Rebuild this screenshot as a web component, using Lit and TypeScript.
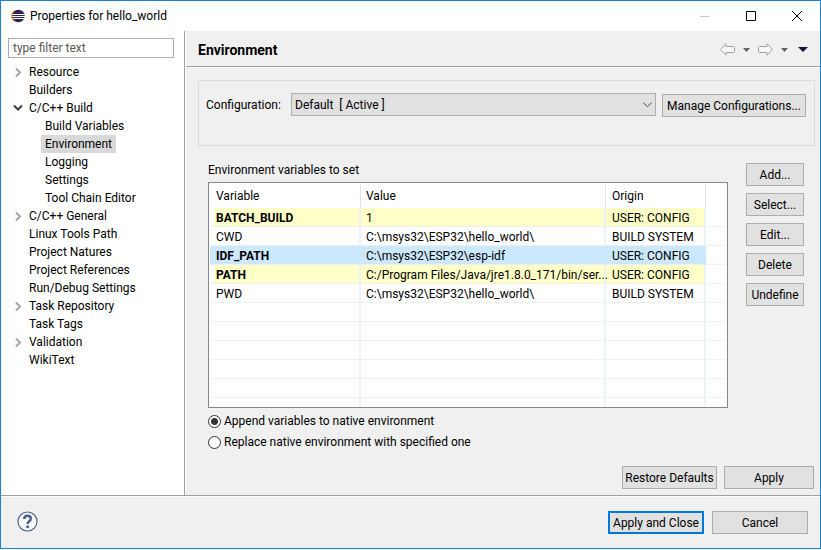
import { LitElement, html, css, svg, nothing } from "lit";
import { customElement, state } from "lit/decorators.js";

interface TreeItem {
  label: string;
  arrow?: "open" | "closed";
  child?: boolean;
}

interface EnvVar {
  name: string;
  value: string;
  origin: string;
}

const TREE: TreeItem[] = [
  { label: "Resource", arrow: "closed" },
  { label: "Builders" },
  { label: "C/C++ Build", arrow: "open" },
  { label: "Build Variables", child: true },
  { label: "Environment", child: true },
  { label: "Logging", child: true },
  { label: "Settings", child: true },
  { label: "Tool Chain Editor", child: true },
  { label: "C/C++ General", arrow: "closed" },
  { label: "Linux Tools Path" },
  { label: "Project Natures" },
  { label: "Project References" },
  { label: "Run/Debug Settings" },
  { label: "Task Repository", arrow: "closed" },
  { label: "Task Tags" },
  { label: "Validation", arrow: "closed" },
  { label: "WikiText" },
];

const VARS: EnvVar[] = [
  { name: "BATCH_BUILD", value: "1", origin: "USER: CONFIG" },
  { name: "CWD", value: "C:\\msys32\\ESP32\\hello_world\\", origin: "BUILD SYSTEM" },
  { name: "IDF_PATH", value: "C:\\msys32\\ESP32\\esp-idf", origin: "USER: CONFIG" },
  { name: "PATH", value: "C:/Program Files/Java/jre1.8.0_171/bin/ser...", origin: "USER: CONFIG" },
  { name: "PWD", value: "C:\\msys32\\ESP32\\hello_world\\", origin: "BUILD SYSTEM" },
];

const EMPTY_ROWS = 5;

const twistie = (kind?: "open" | "closed") =>
  kind === "open"
    ? svg`<path d="M1 3.5L5 7.5L9 3.5" stroke="#404040" />`
    : kind === "closed"
      ? svg`<path d="M3 2.5L7 6.5L3 10.5" stroke="#a6a6a6" />`
      : nothing;

const shared = css`
  * {
    box-sizing: border-box;
  }
  svg {
    display: block;
    flex: none;
  }
  button,
  input,
  select {
    font: inherit;
    color: inherit;
    margin: 0;
    border-radius: 0;
  }
  .btn {
    height: 23px;
    padding: 0;
    border: 1px solid #adadad;
    background: #e1e1e1;
    text-align: center;
    white-space: nowrap;
  }
  .icon-btn {
    display: flex;
    padding: 0;
    border: 0;
    background: none;
  }
`;

@customElement("page-tree")
export class PageTree extends LitElement {
  @state() private selected = "Environment";

  static styles = [
    shared,
    css`
      :host {
        display: block;
        padding: 7px 10px 7px 7px;
        background: #fff;
      }
      .filter {
        display: block;
        width: 100%;
        height: 20px;
        padding: 0 4px;
        border: 1px solid #abadb3;
        background: #fff;
        outline: none;
      }
      .filter::placeholder {
        color: #5a5a5a;
        opacity: 1;
      }
      .tree {
        margin: 5px 0 0;
        padding: 0;
        list-style: none;
      }
      .item {
        display: flex;
        align-items: center;
        height: 18px;
        padding-left: 5px;
      }
      .item.child {
        padding-left: 21px;
      }
      .twistie {
        width: 12px;
        height: 12px;
      }
      .label {
        height: 18px;
        padding: 0 4px;
        border: 0;
        background: none;
        line-height: 18px;
        white-space: nowrap;
      }
      .label.selected {
        background: #d9d9d9;
      }
    `,
  ];

  render() {
    return html`
      <input class="filter" type="text" aria-label="Filter" placeholder="type filter text" />
      <ul class="tree">
        ${TREE.map(
          (t) => html`<li class="item ${t.child ? "child" : ""}">
            <svg class="twistie" viewBox="0 0 12 12" fill="none" stroke-width="2" aria-hidden="true">${twistie(t.arrow)}</svg>
            <button class="label ${t.label === this.selected ? "selected" : ""}" @click=${() => (this.selected = t.label)}>${t.label}</button>
          </li>`
        )}
      </ul>
    `;
  }
}

@customElement("variable-table")
export class VariableTable extends LitElement {
  @state() private selected = "IDF_PATH";

  static styles = [
    shared,
    css`
      :host {
        display: block;
        padding: 1px;
        border: 1px solid #828790;
        background: #fff;
      }
      .grid {
        width: 100%;
        table-layout: fixed;
        border-collapse: separate;
        border-spacing: 0;
      }
      .c-name {
        width: 151px;
      }
      .c-origin {
        width: 100px;
      }
      .c-rest {
        width: 20px;
      }
      th,
      td {
        height: 19px;
        padding: 2px 0 0 6px;
        border-right: 2px solid #edf2f8;
        border-bottom: 1px solid #f0f0f0;
        background-clip: padding-box;
        line-height: 16px;
        text-align: left;
        white-space: nowrap;
        font-weight: normal;
      }
      th {
        height: 24px;
        padding-top: 0;
        border-right: 1px solid #e5e5e5;
        border-bottom: 0;
      }
      th:nth-child(2),
      td:nth-child(2) {
        padding-left: 5px;
      }
      th:last-child,
      td:last-child {
        border-right: 0;
      }
      .user td {
        background-color: #ffffc8;
      }
      .user td:first-child {
        background: linear-gradient(90deg, #fff 4px, #ffffc8 4px) padding-box;
        font-weight: bold;
      }
      .user td:last-child {
        background: #fff;
      }
      .user.selected td:not(:last-child) {
        border-right-color: #cce8ff;
        background: #cce8ff;
      }
      tbody tr:last-child td {
        height: 8px;
        border-bottom: 0;
      }
    `,
  ];

  render() {
    return html`
      <table class="grid" aria-label="Environment variables to set">
        <colgroup>
          <col class="c-name" />
          <col />
          <col class="c-origin" />
          <col class="c-rest" />
        </colgroup>
        <thead>
          <tr><th>Variable</th><th>Value</th><th>Origin</th><th></th></tr>
        </thead>
        <tbody>
          ${VARS.map(
            (v) => html`<tr
              class="${v.origin === "USER: CONFIG" ? "user" : ""} ${v.name === this.selected ? "selected" : ""}"
              @click=${() => (this.selected = v.name)}
            ><td>${v.name}</td><td>${v.value}</td><td>${v.origin}</td><td></td></tr>`
          )}
          ${Array.from({ length: EMPTY_ROWS + 1 }, () => html`<tr><td></td><td></td><td></td><td></td></tr>`)}
        </tbody>
      </table>
    `;
  }
}

@customElement("app-root")
export class AppRoot extends LitElement {
  static styles = [
    shared,
    css`
      :host {
        display: block;
        font: 12px/16px Roboto, "Open Sans", sans-serif;
        color: #000;
      }
      .window {
        display: flex;
        flex-direction: column;
        min-height: calc(100vh - 1px);
        border: 1px solid #1883d7;
        background: #f0f0f0;
      }
      .titlebar {
        display: flex;
        align-items: center;
        height: 30px;
        padding: 0 17px 0 10px;
        background: #fff;
      }
      .title {
        flex: 1;
        margin-left: 5px;
      }
      .controls {
        display: flex;
        gap: 34px;
      }
      .main {
        display: flex;
        flex: 1;
        border-bottom: 1px solid #a0a0a0;
      }
      .side {
        flex: none;
        width: 184px;
        border-right: 1px solid #a0a0a0;
      }
      .page {
        display: flex;
        flex: 1;
        flex-direction: column;
        min-width: 0;
        border-left: 1px solid #fff;
      }
      .header {
        display: flex;
        align-items: center;
        height: 36px;
        padding: 2px 12px 0;
        border-bottom: 1px solid #a0a0a0;
        box-shadow: 0 1px #fff;
      }
      .heading {
        flex: 1;
        margin: 0;
        font-size: 14px;
        line-height: 18px;
      }
      .nav {
        display: flex;
        align-items: center;
      }
      .drop {
        margin: 0 8px;
      }
      .menu {
        margin-left: 2px;
      }
      .config {
        display: flex;
        align-items: flex-start;
        height: 66px;
        margin: 13px 5px 0 12px;
        padding: 12px 8px 12px 7px;
        border: 1px solid #dcdcdc;
      }
      .config-label {
        flex: none;
        width: 85px;
        margin-top: 4px;
        white-space: nowrap;
      }
      .combo {
        display: grid;
        flex: 1;
        align-items: center;
        margin-right: 6px;
      }
      .select {
        grid-area: 1 / 1;
        width: 100%;
        height: 23px;
        padding: 0 20px 0 3px;
        border: 1px solid #adadad;
        background: #e1e1e1;
        appearance: none;
        white-space: pre;
      }
      .chevron {
        grid-area: 1 / 1;
        justify-self: end;
        margin-right: 4px;
        pointer-events: none;
      }
      .manage {
        width: 144px;
        margin-top: 1px;
      }
      .env {
        display: flex;
        gap: 18px;
        margin: 16px 16px 0 22px;
      }
      .vars {
        flex: 1;
        min-width: 0;
      }
      .caption {
        display: block;
        margin-bottom: 4px;
      }
      .actions {
        display: flex;
        flex-direction: column;
        gap: 7px;
        width: 58px;
        margin-top: 1px;
      }
      .radios {
        display: flex;
        flex-direction: column;
        gap: 5px;
        margin-top: 5px;
      }
      .radio {
        display: flex;
        align-items: center;
        gap: 3px;
      }
      .radio input {
        width: 13px;
        height: 13px;
        border: 1px solid #333;
        border-radius: 50%;
        background: #fff;
        appearance: none;
      }
      .radio input:checked {
        background: radial-gradient(circle, #333 3px, #fff 4px);
      }
      .page-buttons {
        display: flex;
        justify-content: flex-end;
        gap: 7px;
        margin: auto 6px 6px;
      }
      .restore {
        width: 95px;
      }
      .apply {
        width: 90px;
      }
      .footer {
        display: flex;
        align-items: center;
        justify-content: flex-end;
        gap: 8px;
        height: 52px;
        padding: 0 12px 0 16px;
        border-top: 1px solid #fff;
      }
      .help {
        margin-right: auto;
        padding-bottom: 2px;
      }
      .wide {
        width: 96px;
      }
      .default {
        border: 2px solid #0078d7;
      }
    `,
  ];

  render() {
    return html`
      <div class="window">
        <div class="titlebar">
          <svg width="14" height="14" viewBox="0 0 14 14" aria-hidden="true">
            <circle cx="6" cy="7" r="6" fill="#f7941e" />
            <circle cx="7.5" cy="7" r="6.2" fill="#2c2255" />
            <path d="M1 5.5H14M1 7.5H14M2 9.5H13" stroke="#fff" />
          </svg>
          <span class="title">Properties for hello_world</span>
          <div class="controls">
            <button class="icon-btn" aria-label="Minimize">
              <svg width="12" height="12" viewBox="0 0 12 12"><path d="M1 6.5H11" stroke="#c8c8c8" /></svg>
            </button>
            <button class="icon-btn" aria-label="Maximize">
              <svg width="12" height="12" viewBox="0 0 12 12"><path d="M1.5 1.5H10.5V10.5H1.5Z" fill="none" stroke="#000" /></svg>
            </button>
            <button class="icon-btn" aria-label="Close">
              <svg width="12" height="12" viewBox="0 0 12 12"><path d="M1 1L11 11M11 1L1 11" stroke="#000" /></svg>
            </button>
          </div>
        </div>
        <div class="main">
          <page-tree class="side"></page-tree>
          <div class="page">
            <div class="header">
              <h1 class="heading">Environment</h1>
              <div class="nav">
                <button class="icon-btn" aria-label="Back">
                  <svg width="15" height="13" viewBox="0 0 15 13"><path d="M.7 6.5L6 .8V3.5H13.5Q14.5 3.5 14.5 4.5V8.5Q14.5 9.5 13.5 9.5H6V12.2Z" fill="#f8f8f8" stroke="#a0a0a0" /></svg>
                </button>
                <button class="icon-btn drop" aria-label="Back history">
                  <svg width="7" height="4" viewBox="0 0 7 4"><path d="M0 0H7L3.5 4Z" fill="#606468" /></svg>
                </button>
                <button class="icon-btn" aria-label="Forward">
                  <svg width="15" height="13" viewBox="0 0 15 13"><path d="M14.3 6.5L9 .8V3.5H1.5Q.5 3.5 .5 4.5V8.5Q.5 9.5 1.5 9.5H9V12.2Z" fill="#f8f8f8" stroke="#a0a0a0" /></svg>
                </button>
                <button class="icon-btn drop" aria-label="Forward history">
                  <svg width="7" height="4" viewBox="0 0 7 4"><path d="M0 0H7L3.5 4Z" fill="#606468" /></svg>
                </button>
                <button class="icon-btn menu" aria-label="Menu">
                  <svg width="10" height="5" viewBox="0 0 10 5"><path d="M0 0H10L5 5Z" fill="#1c1040" /></svg>
                </button>
              </div>
            </div>
            <div class="config">
              <label class="config-label" for="config">Configuration:</label>
              <div class="combo">
                <select class="select" id="config">
                  <option>Default \u00a0[ Active ]</option>
                </select>
                <svg class="chevron" width="9" height="6" viewBox="0 0 9 6" aria-hidden="true"><path d="M.5 .7L4.5 4.7L8.5 .7" fill="none" stroke="#404040" /></svg>
              </div>
              <button class="btn manage">Manage Configurations...</button>
            </div>
            <div class="env">
              <div class="vars">
                <span class="caption">Environment variables to set</span>
                <variable-table></variable-table>
                <div class="radios">
                  <label class="radio"><input type="radio" name="mode" checked />Append variables to native environment</label>
                  <label class="radio"><input type="radio" name="mode" />Replace native environment with specified one</label>
                </div>
              </div>
              <div class="actions">
                ${["Add...", "Select...", "Edit...", "Delete", "Undefine"].map((b) => html`<button class="btn">${b}</button>`)}
              </div>
            </div>
            <div class="page-buttons">
              <button class="btn restore">Restore Defaults</button>
              <button class="btn apply">Apply</button>
            </div>
          </div>
        </div>
        <div class="footer">
          <button class="icon-btn help" aria-label="Help">
            <svg width="21" height="21" viewBox="0 0 21 21">
              <circle cx="10.5" cy="10.5" r="9.5" fill="#f6f8fb" stroke="#53678f" stroke-width="1.2" />
              <path d="M7.2 8Q7.2 4.7 10.6 4.7Q13.8 4.7 13.8 7.5Q13.8 9.2 12.2 10.2Q10.6 11.2 10.6 13" fill="none" stroke="#4a5c8c" stroke-width="2.4" />
              <circle cx="10.6" cy="15.8" r="1.5" fill="#4a5c8c" />
            </svg>
          </button>
          <button class="btn wide default">Apply and Close</button>
          <button class="btn wide">Cancel</button>
        </div>
      </div>
    `;
  }
}
